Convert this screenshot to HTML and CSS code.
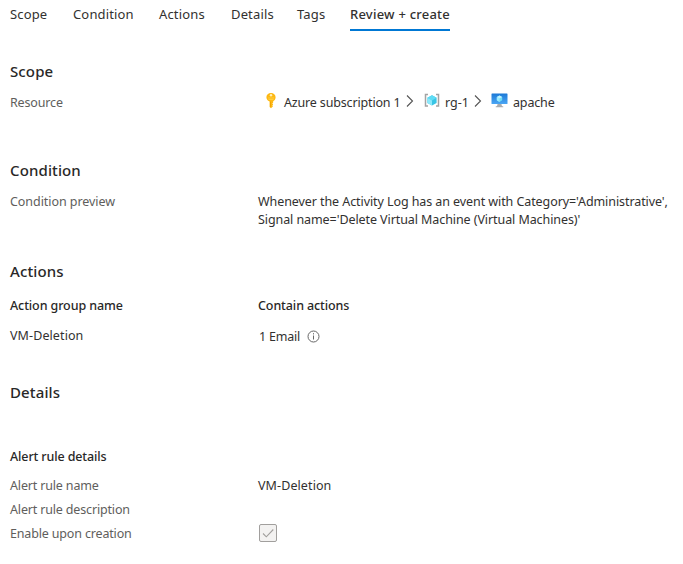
FILE: index.html
```
<!DOCTYPE html>
<html lang="en">
<head>
<meta charset="utf-8">
<title>Create an alert rule</title>
<link rel="stylesheet" href="styles.css">
</head>
<body>
<nav class="tabs">
  <a class="tab">Scope</a>
  <a class="tab">Condition</a>
  <a class="tab">Actions</a>
  <a class="tab">Details</a>
  <a class="tab">Tags</a>
  <a class="tab tab-active">Review + create</a>
</nav>
<main>
  <section class="scope">
    <h2>Scope</h2>
    <div class="row">
      <span class="label">Resource</span>
      <div class="path">
        <svg class="key" width="12" height="17" viewBox="0 0 12 17"><path d="M6 1c2.700 0 4.600 1.900 4.600 4.300 0 1.800-1 3.300-2.400 4v1.200l-.9.900.9 1-.9 1 .7.900L6 16.300 4.600 15V9.400C2.500 8.700 1.400 7.200 1.400 5.300 1.400 2.900 3.300 1 6 1z" fill="#fdb813"/><path d="M5.500 9.500v5.300" stroke="#f0a000" stroke-width=".9"/><circle cx="6" cy="3.200" r="1.200" fill="#fff0b8"/><path d="M3 6h6M3.500 7.500h5" stroke="#ffd34d" stroke-width=".8"/></svg>
        <span class="sub">Azure subscription 1</span>
        <svg class="chev" width="8" height="14" viewBox="0 0 8 14"><path d="M1 1.500 6.500 7 1 12.500" fill="none" stroke="#555" stroke-width="1.100"/></svg>
        <svg class="group" width="16" height="15" viewBox="0 0 16 15"><path d="M4 1.500H1.500v11.500H4M12 1.500h2.500v11.500H12" fill="none" stroke="#a3a3a3" stroke-width="1.500"/><path d="M8 2.200 12.600 4.800v5.200L8 12.600 3.400 10V4.800z" fill="#38c5e5"/><path d="M8 2.200l4.600 2.600L8 7.500 3.400 4.800z" fill="#5fdcf5"/><path d="M3.400 4.800 8 7.500v5.100L3.400 10z" fill="#8ce8fb"/></svg>
        <span class="rg">rg-1</span>
        <svg class="chev chev-last" width="8" height="14" viewBox="0 0 8 14"><path d="M1 1.500 6.500 7 1 12.500" fill="none" stroke="#555" stroke-width="1.100"/></svg>
        <svg class="vm" width="17" height="15" viewBox="0 0 17 15"><defs><linearGradient id="screen" x2="0" y2="1"><stop stop-color="#1b78d6"/><stop offset="1" stop-color="#4ba6f4"/></linearGradient></defs><rect x=".5" y=".5" width="16" height="10.500" rx=".6" fill="url(#screen)"/><path d="M8.500 2.500 11.200 4v3.300L8.500 8.900 5.800 7.300V4z" fill="#6fdcf5"/><path d="M8.500 2.500 11.200 4 8.500 5.600 5.800 4z" fill="#c3f1ff"/><path d="M5.800 4l2.700 1.600v3.300L5.800 7.300z" fill="#9cebff"/><path d="M6.500 11h4c0 1.800.5 2.300 1.800 2.500v.8H4.700v-.8C6 13.300 6.500 12.800 6.500 11z" fill="#aaacae"/></svg>
        <span class="app">apache</span>
      </div>
    </div>
  </section>
  <section class="condition">
    <h2>Condition</h2>
    <div class="row">
      <span class="label label-wide">Condition preview</span>
      <p class="preview">Whenever the Activity Log has an event with Category='Administrative',<br>Signal name='Delete Virtual Machine (Virtual Machines)'</p>
    </div>
  </section>
  <section class="actions">
    <h2>Actions</h2>
    <div class="row head"><span>Action group name</span><span>Contain actions</span></div>
    <div class="row"><span class="value">VM-Deletion</span>
      <span class="email"><span>1 Email</span><svg width="13" height="13" viewBox="0 0 13 13"><circle cx="6.500" cy="6.500" r="5.500" fill="none" stroke="#666"/><path d="M6.500 5.500v4M6.500 3.200v1.200" stroke="#666"/></svg></span>
    </div>
  </section>
  <section class="details">
    <h2>Details</h2>
    <h3>Alert rule details</h3>
    <div class="row"><span class="label">Alert rule name</span><span class="value">VM-Deletion</span></div>
    <div class="row"><span class="label">Alert rule description</span></div>
    <div class="row"><span class="label">Enable upon creation</span>
      <svg class="check" width="20" height="20" viewBox="0 0 20 20"><rect x="1.500" y="1.500" width="17" height="17" rx="1.500" fill="#f3f2f1" stroke="#a19f9d"/><path d="M5 10.500 8.300 13.800 15.300 6.500" fill="none" stroke="#a19f9d" stroke-width="1.100"/></svg>
    </div>
  </section>
</main>
</body>
</html>
```
FILE: styles.css
```
* { box-sizing: border-box; }
body { margin: 0; padding: 0 0 0 10px; background: #fff; color: #323130; font: 12.5px/18px "Noto Sans", "Open Sans", sans-serif; }
h2, h3, p { margin: 0; }
h2 { font-size: 15px; line-height: 18px; height: 20px; font-weight: 550; letter-spacing: .12px; color: #292827; }
h3 { font-size: 12.5px; line-height: 18px; font-weight: 550; letter-spacing: -.12px; color: #292827; }
.tabs { display: grid; grid-template-columns: 63px 86px 72px 66px 53px 100px; height: 31px; padding-top: 5px; font-size: 13px; letter-spacing: .15px; }
.tab { white-space: nowrap; }
.tab-active { font-weight: 500; letter-spacing: .22px; border-bottom: 2px solid #0078d4; }
.row { display: grid; grid-template-columns: 248px 1fr; min-height: 18px; white-space: nowrap; }
.label { color: #605e5c; letter-spacing: -.16px; }
.label-wide { letter-spacing: -.06px; }
.value { letter-spacing: .1px; }
.preview { letter-spacing: -.08px; }
.path { display: flex; align-items: flex-start; letter-spacing: -.16px; }
.key { margin: -2px 7px 0 7px; }
.sub { width: 122px; }
.chev { margin: 0 10px 0 0; }
.group, .vm { margin-top: -1px; }
.rg { width: 29px; margin-left: 5px; letter-spacing: 0; }
.chev-last { margin-right: 9px; }
.vm { margin-right: 5px; }
.scope { padding-top: 31px; height: 130px; }
.scope .row { margin-top: 12px; }
.condition { height: 101px; }
.condition .row { margin-top: 12px; }
.actions { height: 121px; }
.head { font-weight: 550; letter-spacing: -.1px; margin: 15px 0 12px; color: #292827; }
.details h3 { margin: 45px 0 11px; }
.details .row { height: 24px; }
.check { margin-top: -2px; }
.email { display: flex; gap: 7px; padding: 1px 0 0 1px; letter-spacing: -.2px; }
.email svg { margin-top: 2px; }
```
